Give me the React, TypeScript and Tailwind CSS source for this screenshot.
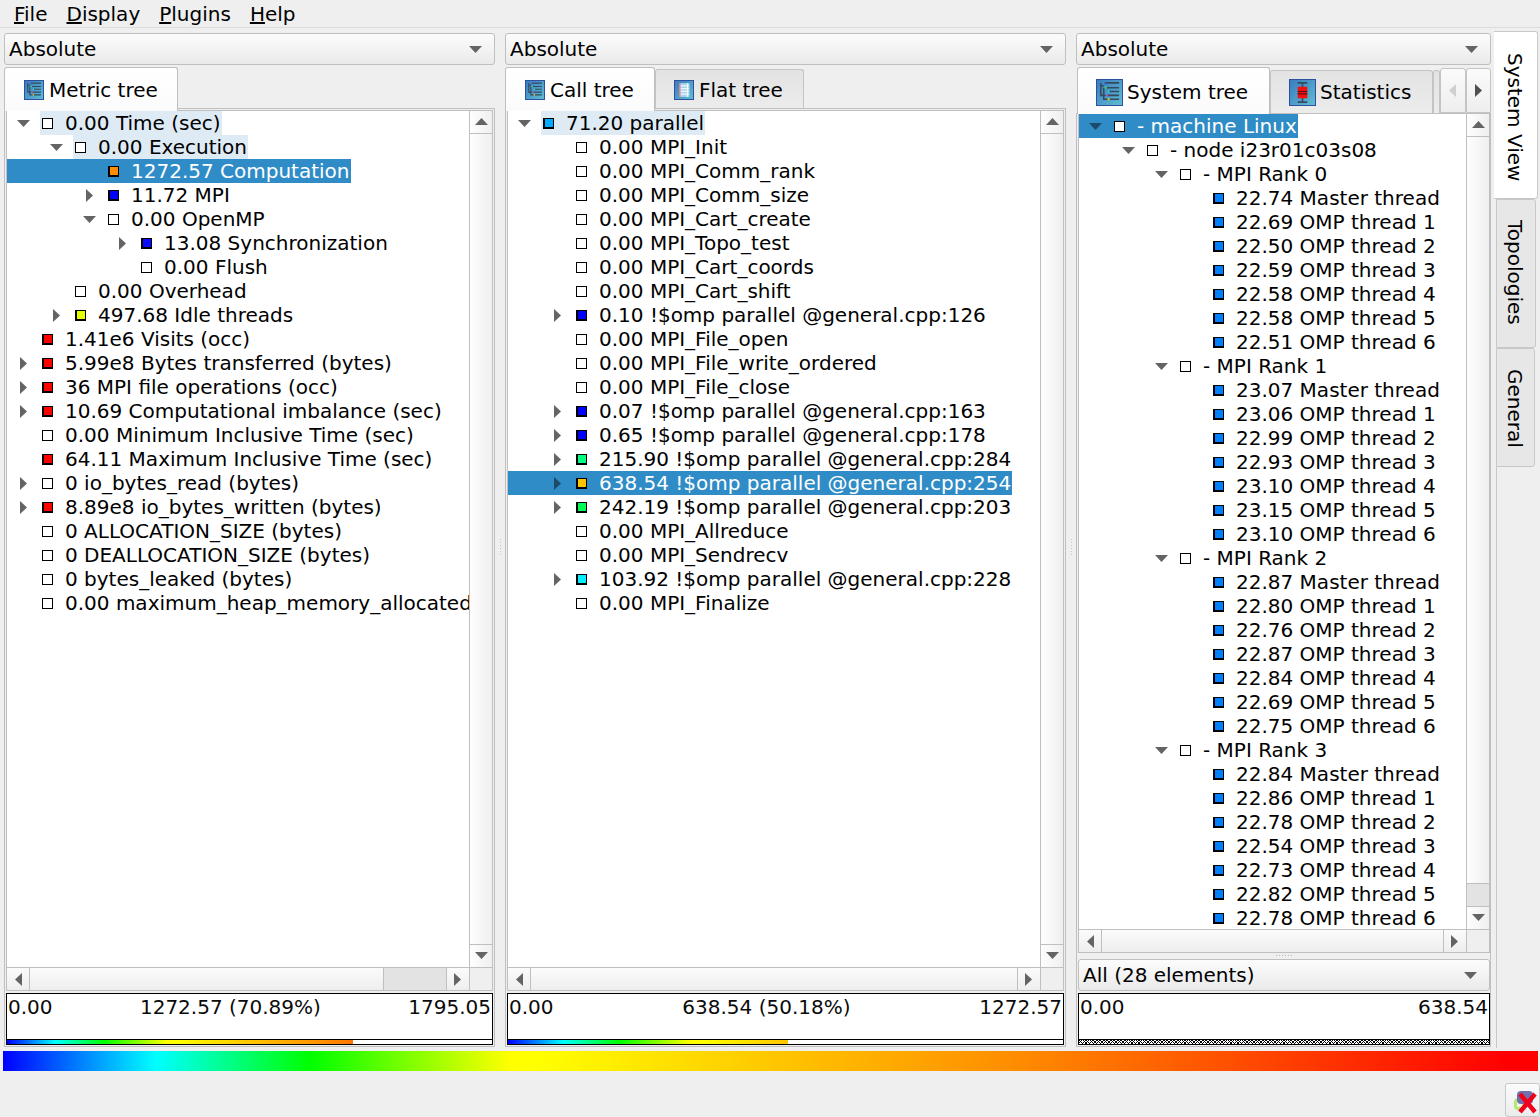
import React from "react";

type Row = {
  level: number;
  arrow?: "down" | "right";
  color?: string;
  text: string;
  state?: "selected" | "found";
};

const LEVELS = ["pl-0", "pl-[33px]", "pl-[66px]", "pl-[99px]"];

const RED = "bg-[#ff0000]";
const BLUE = "bg-[#0000ff]";
const THREAD = "bg-[#0080ff]";

const metricRows: Row[] = [
  { level: 0, arrow: "down", text: "0.00 Time (sec)", state: "found" },
  { level: 1, arrow: "down", text: "0.00 Execution", state: "found" },
  { level: 2, color: "bg-[#ff8c00]", text: "1272.57 Computation", state: "selected" },
  { level: 2, arrow: "right", color: BLUE, text: "11.72 MPI" },
  { level: 2, arrow: "down", text: "0.00 OpenMP" },
  { level: 3, arrow: "right", color: "bg-[#0a0aff]", text: "13.08 Synchronization" },
  { level: 3, text: "0.00 Flush" },
  { level: 1, text: "0.00 Overhead" },
  { level: 1, arrow: "right", color: "bg-[#e6ff00]", text: "497.68 Idle threads" },
  { level: 0, color: RED, text: "1.41e6 Visits (occ)" },
  { level: 0, arrow: "right", color: RED, text: "5.99e8 Bytes transferred (bytes)" },
  { level: 0, arrow: "right", color: RED, text: "36 MPI file operations (occ)" },
  { level: 0, arrow: "right", color: RED, text: "10.69 Computational imbalance (sec)" },
  { level: 0, text: "0.00 Minimum Inclusive Time (sec)" },
  { level: 0, color: RED, text: "64.11 Maximum Inclusive Time (sec)" },
  { level: 0, arrow: "right", text: "0 io_bytes_read (bytes)" },
  { level: 0, arrow: "right", color: RED, text: "8.89e8 io_bytes_written (bytes)" },
  { level: 0, text: "0 ALLOCATION_SIZE (bytes)" },
  { level: 0, text: "0 DEALLOCATION_SIZE (bytes)" },
  { level: 0, text: "0 bytes_leaked (bytes)" },
  { level: 0, text: "0.00 maximum_heap_memory_allocated" },
];

const callRows: Row[] = [
  { level: 0, arrow: "down", color: "bg-[#00aaff]", text: "71.20 parallel", state: "found" },
  { level: 1, text: "0.00 MPI_Init" },
  { level: 1, text: "0.00 MPI_Comm_rank" },
  { level: 1, text: "0.00 MPI_Comm_size" },
  { level: 1, text: "0.00 MPI_Cart_create" },
  { level: 1, text: "0.00 MPI_Topo_test" },
  { level: 1, text: "0.00 MPI_Cart_coords" },
  { level: 1, text: "0.00 MPI_Cart_shift" },
  { level: 1, arrow: "right", color: BLUE, text: "0.10 !$omp parallel @general.cpp:126" },
  { level: 1, text: "0.00 MPI_File_open" },
  { level: 1, text: "0.00 MPI_File_write_ordered" },
  { level: 1, text: "0.00 MPI_File_close" },
  { level: 1, arrow: "right", color: BLUE, text: "0.07 !$omp parallel @general.cpp:163" },
  { level: 1, arrow: "right", color: BLUE, text: "0.65 !$omp parallel @general.cpp:178" },
  { level: 1, arrow: "right", color: "bg-[#00ff80]", text: "215.90 !$omp parallel @general.cpp:284" },
  { level: 1, arrow: "right", color: "bg-[#ffc400]", text: "638.54 !$omp parallel @general.cpp:254", state: "selected" },
  { level: 1, arrow: "right", color: "bg-[#00ff55]", text: "242.19 !$omp parallel @general.cpp:203" },
  { level: 1, text: "0.00 MPI_Allreduce" },
  { level: 1, text: "0.00 MPI_Sendrecv" },
  { level: 1, arrow: "right", color: "bg-[#00f0ff]", text: "103.92 !$omp parallel @general.cpp:228" },
  { level: 1, text: "0.00 MPI_Finalize" },
];

const threads = [
  ["22.74", "22.69", "22.50", "22.59", "22.58", "22.58", "22.51"],
  ["23.07", "23.06", "22.99", "22.93", "23.10", "23.15", "23.10"],
  ["22.87", "22.80", "22.76", "22.87", "22.84", "22.69", "22.75"],
  ["22.84", "22.86", "22.78", "22.54", "22.73", "22.82", "22.78"],
];

const systemRows: Row[] = [
  { level: 0, arrow: "down", text: "- machine Linux", state: "selected" },
  { level: 1, arrow: "down", text: "- node i23r01c03s08" },
];
threads.forEach((rank, r) => {
  systemRows.push({ level: 2, arrow: "down", text: `- MPI Rank ${r}` });
  rank.forEach((value, i) => {
    systemRows.push({
      level: 3,
      color: THREAD,
      text: i === 0 ? `${value} Master thread` : `${value} OMP thread ${i}`,
    });
  });
});

const Triangle = ({ dir, className }: { dir: "up" | "down" | "left" | "right"; className?: string }) => {
  const points = {
    up: "0,7 13,7 6.5,0",
    down: "0,0 13,0 6.5,7",
    left: "7,0 7,13 0,6.5",
    right: "0,0 0,13 7,6.5",
  }[dir];
  const vertical = dir === "up" || dir === "down";
  return (
    <svg
      width={vertical ? 13 : 7}
      height={vertical ? 7 : 13}
      viewBox={vertical ? "0 0 13 7" : "0 0 7 13"}
      className={className ?? "fill-[#646464]"}
    >
      <polygon points={points} />
    </svg>
  );
};

const Square = ({ color }: { color?: string }) =>
  color ? (
    <span className={`h-[11px] w-[11px] shrink-0 border-b-2 border-l-2 border-r border-t border-black ${color}`} />
  ) : (
    <span className="h-[11px] w-[11px] shrink-0 border border-black bg-white" />
  );

const TreeRow = ({ row }: { row: Row }) => {
  const selected = row.state === "selected";
  return (
    <div
      className={`flex h-[24px] w-fit items-center whitespace-nowrap ${LEVELS[row.level]} ${
        selected ? "bg-[#308cc6] text-white" : "text-black"
      }`}
    >
      <span className="flex w-[33px] shrink-0 items-center justify-center">
        {row.arrow && (
          <Triangle dir={row.arrow} className={selected ? "fill-[#1d4a68]" : "fill-[#646464]"} />
        )}
      </span>
      <span
        className={`flex h-[24px] items-center gap-[12px] pl-[2px] pr-[1px] ${
          row.state === "found" ? "bg-[#deebf5]" : ""
        }`}
      >
        <Square color={row.color} />
        <span>{row.text}</span>
      </span>
    </div>
  );
};

const ArrowButton = ({ dir, className }: { dir: "up" | "down" | "left" | "right"; className: string }) => (
  <div className={`flex shrink-0 items-center justify-center border-[#bfbfbf] ${className}`}>
    <Triangle dir={dir} />
  </div>
);

const TreeFrame = ({
  rows,
  height,
  hThumb,
  vThumb,
}: {
  rows: Row[];
  height: string;
  hThumb?: boolean;
  vThumb?: boolean;
}) => (
  <div className={`flex flex-col border border-[#bfbfbf] bg-white ${height}`}>
    <div className="flex min-h-0 flex-1">
      <div className="min-w-0 flex-1 overflow-hidden">
        {rows.map((row) => (
          <TreeRow key={row.text} row={row} />
        ))}
      </div>
      <div className="flex w-[23px] shrink-0 flex-col border-l border-[#bfbfbf] bg-[linear-gradient(90deg,#fefefe,#efefef)]">
        <ArrowButton dir="up" className="h-[23px] border-b pb-px" />
        <div className="flex-1" />
        {vThumb && <div className="h-[23px] border-t border-[#bfbfbf] bg-[#e3e3e3]" />}
        <ArrowButton dir="down" className="h-[23px] border-t pb-[2px]" />
      </div>
    </div>
    <div className="flex h-[23px] shrink-0 border-t border-[#bfbfbf] bg-[linear-gradient(180deg,#fbfbfb,#eeeeee)]">
      <ArrowButton dir="left" className="w-[23px] border-r" />
      <div className="flex flex-1 justify-end">
        {hThumb && <div className="w-[63px] border-l border-[#bfbfbf] bg-[#e3e3e3]" />}
      </div>
      <ArrowButton dir="right" className="w-[23px] border-l pr-px" />
      <div className="w-[23px] shrink-0 border-l border-[#bfbfbf] bg-[#efefef]" />
    </div>
  </div>
);

const Combo = ({ label }: { label: string }) => (
  <div className="flex h-[32px] shrink-0 items-center justify-between rounded-[3px] border border-[#bfbfbf] bg-[linear-gradient(180deg,#fcfcfc,#eaeaea)] pl-[4px] pr-[12px]">
    <span>{label}</span>
    <Triangle dir="down" />
  </div>
);

const GRADIENT =
  "bg-[linear-gradient(90deg,#0000ff_0%,#00ffff_10%,#00ff00_20%,#ffff00_33%,#ffff00_35%,#ff8c00_66%,#ff0000_98%)]";

const ValueBox = ({ labels, bar, barInner }: { labels: string[]; bar?: string; barInner?: string }) => (
  <div className="flex h-[52px] shrink-0 flex-col border border-black bg-white">
    <div className="flex h-[45px] justify-between px-px pt-px text-[#0a0a0a]">
      {labels.map((label) => (
        <span key={label}>{label}</span>
      ))}
    </div>
    <div className="h-[5px] border-t border-black">
      {bar ? (
        <div className={`h-[4px] overflow-hidden ${bar}`}>
          <div className={`h-[4px] ${barInner} ${GRADIENT}`} />
        </div>
      ) : (
        <div className="h-[4px] bg-white bg-[repeating-linear-gradient(45deg,#000_0_0.7px,transparent_0.7px_2.5px),repeating-linear-gradient(-45deg,#000_0_0.7px,transparent_0.7px_2.5px)]" />
      )}
    </div>
  </div>
);

const IconBox = ({ size, children }: { size: string; children: React.ReactNode }) => (
  <div className={`shrink-0 border border-[#2f4fa0] bg-[linear-gradient(135deg,#3a7cc0,#5fbcd0)] ${size}`}>
    <svg viewBox="0 0 26 26" className="h-full w-full">
      {children}
    </svg>
  </div>
);

const TreeIcon = ({ size }: { size: string }) => (
  <IconBox size={size}>
    <g stroke="#35495f" strokeWidth="1.6" fill="none">
      <path d="M4 3v13h5M7 8v12h5M4 6h3M8 3h15M10 8h13M11 12h12M11 16h12M13 20h10" />
    </g>
    <rect x="8" y="3" width="2" height="2" fill="#4060e0" />
    <rect x="8" y="7" width="2" height="2" fill="#30e050" />
    <rect x="11" y="11" width="2" height="2" fill="#30e0e0" />
    <rect x="10" y="15" width="2" height="2" fill="#c04090" />
    <rect x="11" y="19" width="2" height="2" fill="#e0d020" />
  </IconBox>
);

const FlatIcon = ({ size }: { size: string }) => (
  <IconBox size={size}>
    <rect x="6" y="3" width="15" height="20" fill="#a9d4ee" />
    <path d="M7 7h13M7 11h13M7 15h13M7 19h13" stroke="#eaf6ff" strokeWidth="1.6" />
    <path d="M7 3v20" stroke="#f07070" strokeWidth="1.8" />
    <path d="M18 3v20" stroke="#ffffff" strokeWidth="1.2" />
  </IconBox>
);

const StatsIcon = ({ size }: { size: string }) => (
  <IconBox size={size}>
    <path d="M8 3h10M13 3v20M8 23h10" stroke="#35495f" strokeWidth="1.6" />
    <rect x="8" y="7" width="10" height="12" fill="#f01010" />
    <path d="M8 12h10M8 14.5h10" stroke="#5a1010" strokeWidth="1.2" />
  </IconBox>
);

const ACTIVE_TAB =
  "relative z-10 flex shrink-0 items-start rounded-t-[3px] border border-b-0 border-[#bfbfbf] bg-[linear-gradient(180deg,#ffffff,#fbfbfb)]";
const IDLE_TAB =
  "flex shrink-0 items-start rounded-t-[3px] border border-b-0 border-[#c4c4c4] bg-[linear-gradient(180deg,#e3e3e3,#ececec)]";

const LeftPanel = () => (
  <div className="flex w-[491px] shrink-0 flex-col pt-[5px]">
    <Combo label="Absolute" />
    <div className="mt-[2px] flex h-[41px] shrink-0 items-start">
      <div className={`${ACTIVE_TAB} h-[44px] w-[174px] gap-[5px] pl-[19px] pt-[10px]`}>
        <div className="flex h-[24px] items-center">
          <TreeIcon size="h-[20px] w-[20px]" />
        </div>
        <span>Metric tree</span>
      </div>
    </div>
    <div className="h-[939px] border border-[#bfbfbf] p-px">
      <TreeFrame rows={metricRows} height="h-[881px]" hThumb />
      <div className="mt-[2px]">
        <ValueBox
          labels={["0.00", "1272.57 (70.89%)", "1795.05"]}
          bar="w-[346px]"
          barInner="w-[485px]"
        />
      </div>
    </div>
  </div>
);

const MiddlePanel = () => (
  <div className="flex w-[561px] shrink-0 flex-col pt-[5px]">
    <Combo label="Absolute" />
    <div className="mt-[2px] flex h-[41px] shrink-0 items-start">
      <div className={`${ACTIVE_TAB} h-[44px] w-[150px] gap-[5px] pl-[19px] pt-[10px]`}>
        <div className="flex h-[24px] items-center">
          <TreeIcon size="h-[20px] w-[20px]" />
        </div>
        <span>Call tree</span>
      </div>
      <div className={`${IDLE_TAB} mt-[2px] h-[39px] w-[149px] gap-[5px] pl-[18px] pt-[8px]`}>
        <div className="flex h-[24px] items-center">
          <FlatIcon size="h-[20px] w-[20px]" />
        </div>
        <span>Flat tree</span>
      </div>
    </div>
    <div className="h-[939px] border border-[#bfbfbf] p-px">
      <TreeFrame rows={callRows} height="h-[881px]" />
      <div className="mt-[2px]">
        <ValueBox
          labels={["0.00", "638.54 (50.18%)", "1272.57"]}
          bar="w-[280px]"
          barInner="w-[555px]"
        />
      </div>
    </div>
  </div>
);

const RightPanel = () => (
  <div className="flex w-[415px] shrink-0 flex-col pt-[5px]">
    <Combo label="Absolute" />
    <div className="mt-[2px] flex h-[46px] shrink-0 items-start pl-px">
      <div className={`${ACTIVE_TAB} h-[47px] w-[193px] gap-[4px] pl-[18px] pt-[12px]`}>
        <div className="flex h-[24px] items-center">
          <TreeIcon size="h-[27px] w-[27px]" />
        </div>
        <span>System tree</span>
      </div>
      <div className={`${IDLE_TAB} mt-[3px] h-[43px] w-[163px] gap-[4px] pl-[18px] pt-[9px]`}>
        <div className="flex h-[24px] items-center">
          <StatsIcon size="h-[27px] w-[27px]" />
        </div>
        <span>Statistics</span>
      </div>
      <div className={`${IDLE_TAB} mt-[3px] h-[43px] w-[7px]`} />
      <div className="relative z-10 mt-px flex h-[45px] w-[26px] shrink-0 items-center justify-center rounded-t-[3px] border border-[#c4c4c4] bg-[linear-gradient(180deg,#fbfbfb,#eeeeee)] pr-[2px]">
        <Triangle dir="left" className="fill-[#d0d0d0]" />
      </div>
      <div className="relative z-10 mt-px flex h-[45px] w-[25px] shrink-0 items-center justify-center rounded-t-[3px] border border-[#c4c4c4] bg-[linear-gradient(180deg,#fbfbfb,#eeeeee)]">
        <Triangle dir="right" className="fill-[#505050]" />
      </div>
    </div>
    <div className="h-[934px] border border-t-0 border-[#bfbfbf] pb-px pl-px">
      <TreeFrame rows={systemRows} height="h-[840px]" vThumb />
      <div className="flex h-[6px] items-start justify-center gap-[2px] pt-[2px]">
        {[0, 1, 2, 3, 4, 5].map((i) => (
          <span key={i} className="h-px w-px bg-[#b5b5b5]" />
        ))}
      </div>
      <Combo label="All (28 elements)" />
      <div className="mt-[2px]">
        <ValueBox labels={["0.00", "638.54"]} />
      </div>
    </div>
  </div>
);

const Splitter = () => (
  <div className="flex w-[10px] shrink-0 flex-col items-center gap-[2px] pt-[511px]">
    {[0, 1, 2, 3, 4, 5].map((i) => (
      <span key={i} className="h-px w-px bg-[#c4c4c4]" />
    ))}
  </div>
);

const SideTabs = () => (
  <div className="flex w-[49px] shrink-0 flex-col pl-[3px] pt-[3px] text-black">
    <div className="h-[168px] w-[44px] rounded-r-[3px] border border-l-0 border-[#c8c8c8] bg-white pr-[10px] pt-[21px] [writing-mode:vertical-rl]">
      System View
    </div>
    <div className="ml-[2px] h-[149px] w-[40px] rounded-r-[3px] border border-[#c8c8c8] bg-[#e7e7e7] pr-[8px] pt-[20px] [writing-mode:vertical-rl]">
      Topologies
    </div>
    <div className="ml-[2px] h-[119px] w-[39px] rounded-r-[3px] border border-[#c8c8c8] bg-[#e7e7e7] pr-[7px] pt-[20px] [writing-mode:vertical-rl]">
      General
    </div>
    <div className="ml-[2px] h-[581px] border-l border-[#c8c8c8]" />
  </div>
);

const CloseIcon = () => (
  <svg viewBox="0 0 30 30" className="h-[30px] w-[30px]">
    <rect x="7.5" y="14.5" width="8" height="9" rx="2.5" fill="none" stroke="#b7e86e" strokeWidth="3" />
    <rect x="9" y="6" width="16" height="13" rx="4" fill="#6f70ae" />
    <path d="M12 9 L27 27 M27 9 L12 27" stroke="#f0001c" strokeWidth="4.5" />
  </svg>
);

export default function App() {
  return (
    <div className="flex h-[1117px] w-[1540px] flex-col overflow-hidden bg-[#efefef] font-['DejaVu_Sans',sans-serif] text-[20px] leading-[24px] text-black">
      <div className="flex h-[28px] shrink-0 items-center border-b border-[#dcdcdc] pl-[4.5px]">
        {["File", "Display", "Plugins", "Help"].map((item) => (
          <span key={item} className="px-[9.5px]">
            <span className="inline-block [&::first-letter]:underline">{item}</span>
          </span>
        ))}
      </div>

      <div className="flex h-[1020px] shrink-0 pl-[4px]">
        <LeftPanel />
        <Splitter />
        <MiddlePanel />
        <Splitter />
        <RightPanel />
        <SideTabs />
      </div>

      <div className={`ml-[3px] mt-[3px] h-[20px] w-[1535px] shrink-0 ${GRADIENT}`} />

      <div className="flex flex-1 justify-end pt-[12px]">
        <div className="flex h-[34px] w-[35px] items-center justify-center rounded-[3px] border border-[#c8c8c8] bg-[linear-gradient(180deg,#fbfbfb,#ececec)]">
          <CloseIcon />
        </div>
      </div>
    </div>
  );
}
